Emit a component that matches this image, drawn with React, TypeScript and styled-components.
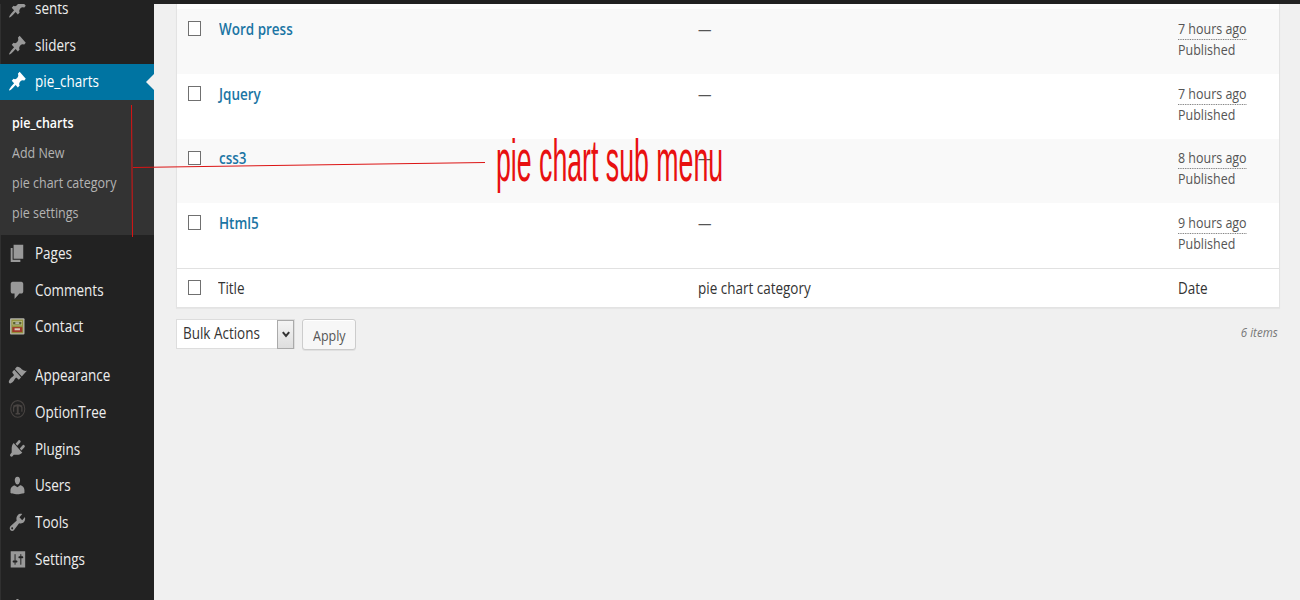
import React from "react";
import styled, { createGlobalStyle } from "styled-components";

const GlobalStyle = createGlobalStyle`
  * { box-sizing: border-box; }
  body { margin: 0; background: #f0f0f0; }
`;

const Page = styled.div`
  position: relative;
  display: flex;
  flex-direction: column;
  width: 1300px;
  height: 600px;
  overflow: hidden;
  background: #f0f0f0;
  font-family: "Open Sans", sans-serif;
`;

const AdminBar = styled.div`
  flex: none;
  height: 4px;
  background: #222;
`;

const Columns = styled.div`
  display: flex;
  flex: 1;
  min-height: 0;
`;

const Sidebar = styled.nav`
  flex: none;
  width: 154px;
  overflow: hidden;
  background: #222;
  box-shadow: inset 1px 0 0 #303030;
`;

const MenuGroup = styled.div<{ $offset?: number }>`
  margin-top: ${(p) => p.$offset ?? 0}px;
`;

const Label = styled.span<{ $size?: number; $weight?: number; $fit?: number; $from?: string }>`
  display: inline-block;
  white-space: nowrap;
  font-size: ${(p) => p.$size ?? 16}px;
  font-weight: ${(p) => p.$weight ?? 400};
  line-height: 20px;
  transform: scaleX(${(p) => p.$fit ?? 0.842});
  transform-origin: ${(p) => p.$from ?? "left"} center;
`;

const MenuRow = styled.div<{ $active?: boolean }>`
  position: relative;
  display: flex;
  align-items: center;
  height: 36.7px;
  padding-left: 8px;
  gap: 7.7px;
  color: ${(p) => (p.$active ? "#fff" : "#eee")};
  background: ${(p) => (p.$active ? "#0074a2" : "transparent")};
  svg {
    flex: none;
    width: 19.3px;
    height: 21.6px;
    overflow: visible;
    fill: ${(p) => (p.$active ? "#fff" : "#999")};
  }
  ${Label} {
    margin-bottom: 1.4px;
  }
`;

const Notch = styled.span`
  position: absolute;
  right: 0;
  top: 10px;
  border: solid transparent;
  border-width: 8.5px 8px 8.5px 0;
  border-right-color: #f0f0f0;
`;

const SubMenu = styled.div`
  height: 135px;
  padding: 7px 0 0 12px;
  background: #333;
`;

const SubItem = styled.div<{ $current?: boolean }>`
  display: flex;
  align-items: center;
  height: 30px;
  color: ${(p) => (p.$current ? "#fff" : "#b4b4b4")};
`;

const Content = styled.main`
  flex: 1;
  padding: 0 20px 0 22px;
`;

const Table = styled.div`
  height: 304px;
  background: #fff;
  border: 1px solid #e3e3e3;
  border-top: 0;
  padding-top: 5.4px;
  box-shadow: 0 1px 1px rgba(0, 0, 0, 0.04);
`;

const Row = styled.div<{ $striped?: boolean }>`
  display: grid;
  grid-template-columns: 41px 480px 480px 1fr;
  height: 64.7px;
  padding-top: 9.5px;
  background: ${(p) => (p.$striped ? "#f9f9f9" : "#fff")};
  color: #555;
`;

const FootRow = styled(Row)`
  height: 39px;
  padding-top: 8.5px;
  border-top: 1px solid #e1e1e1;
  color: #333;
`;

const Check = styled.span`
  display: block;
  width: 13px;
  height: 14.5px;
  margin: 2.5px 0 0 11px;
  border: 1px solid #707070;
  background: #fff;
`;

const TitleText = styled(Label)`
  margin-left: 0.5px;
  color: #1b75a4;
`;

const DateCell = styled.div`
  display: flex;
  flex-direction: column;
  align-items: flex-start;
`;

const Ago = styled(Label)`
  height: 21.1px;
  border-bottom: 1px dotted #666;
`;

const Actions = styled.div`
  display: flex;
  align-items: flex-start;
  padding-top: 10.5px;
`;

const Select = styled.div`
  display: flex;
  width: 119px;
  height: 30px;
  border: 1px solid #ddd;
  background: #fff;
  color: #333;
  padding: 4px 0 0 6px;
  justify-content: space-between;
`;

const SelectValue = styled(Label)`
  width: 94px;
  margin-top: -0.5px;
`;

const Arrow = styled.span`
  display: flex;
  flex: none;
  align-items: center;
  justify-content: center;
  width: 17px;
  height: 29px;
  margin-top: -4px;
  border: 1px solid #aaa;
  background: linear-gradient(#f4f4f4, #dedede);
`;

const Button = styled.div`
  display: flex;
  width: 54px;
  height: 31px;
  margin-left: 6.5px;
  padding: 5px 0 0 10px;
  border: 1px solid #ccc;
  border-radius: 3px;
  background: #f7f7f7;
  box-shadow: inset 0 1px 0 #fff, 0 1px 0 rgba(0, 0, 0, 0.06);
  color: #555;
`;

const Count = styled.div`
  display: flex;
  margin-left: auto;
  padding: 3.5px 2px 0 0;
  font-style: italic;
  color: #777;
`;

const Callout = styled.svg`
  position: absolute;
  left: 0;
  top: 0;
  pointer-events: none;
`;

const CalloutText = styled.span`
  position: absolute;
  left: 495.7px;
  top: 127px;
  white-space: nowrap;
  font: 60px/68px "Liberation Sans", sans-serif;
  color: #e81010;
  transform: scaleX(0.445);
  transform-origin: left center;
`;

const paths = {
  pin: "M10.44 3.02l1.82-1.82 6.36 6.35-1.83 1.82c-1.05-.68-2.48-.57-3.41.36l-.75.75c-.92.93-1.04 2.35-.35 3.41l-1.83 1.82-2.41-2.41-2.8 2.79c-.42.42-3.38 2.71-3.8 2.29s1.86-3.39 2.28-3.81l2.79-2.79L4.1 9.36l1.83-1.82c1.05.69 2.48.57 3.4-.36l.75-.75c.93-.92 1.05-2.35.36-3.41z",
  pages: "M6 15V2h10v13H6zm-1 1h8v2H3V5h2v11z",
  comments: "M5 2h9c1.1 0 2 .9 2 2v7c0 1.1-.9 2-2 2h-2l-5 5v-5H5c-1.1 0-2-.9-2-2V4c0-1.1.9-2 2-2z",
  appearance: "M14.48 11.06L7.41 3.99l1.5-1.5c.5-.56 2.3-.47 3.51.32 1.21.8 1.43 1.28 2.91 2.1 1.18.64 2.45 1.26 4.45.85zm-.71.71L6.7 4.7 4.93 6.47c-.39.39-.39 1.02 0 1.41l1.06 1.06c.39.39.39 1.03 0 1.42-.6.6-1.43 1.11-2.21 1.69-.35.26-.7.53-1.01.84C1.43 14.23.4 16.08 1.4 17.07c.99 1 2.84-.03 4.18-1.36.31-.31.58-.66.85-1.02.57-.78 1.08-1.61 1.69-2.21.39-.39 1.02-.39 1.41 0l1.06 1.06c.39.39 1.02.39 1.41 0z",
  plugins: "M13.11 4.36L9.87 7.6 8 5.73l3.24-3.24c.35-.34 1.05-.2 1.56.32.52.51.66 1.21.31 1.55zm-8 1.77l.91-1.12 9.01 9.01-1.19.84c-.71.71-2.63 1.16-3.82 1.16H6.14L4.9 17.26c-.59.59-1.54.59-2.12 0-.59-.58-.59-1.53 0-2.12l1.24-1.24v-3.88c0-1.13.4-3.19 1.09-3.89zm7.26 3.97l3.24-3.24c.34-.35 1.04-.21 1.55.31.52.51.66 1.21.31 1.55l-3.24 3.25z",
  users: "M10 9.25c-2.27 0-2.73-3.44-2.73-3.44C7 4.02 7.82 2 9.97 2c2.16 0 2.98 2.02 2.71 3.81 0 0-.41 3.44-2.68 3.44zm0 2.57L12.72 10c2.39 0 4.52 2.33 4.52 4.53v2.49s-3.65 1.13-7.24 1.13c-3.65 0-7.24-1.13-7.24-1.13v-2.49c0-2.25 1.94-4.48 4.47-4.48z",
  tools: "M16.68 9.77c-1.34 1.34-3.3 1.67-4.95.99l-5.41 6.52c-.99.99-2.59.99-3.58 0s-.99-2.59 0-3.57l6.52-5.42c-.68-1.65-.35-3.61.99-4.95 1.28-1.28 3.12-1.62 4.72-1.06l-2.89 2.89 2.82 2.82 2.86-2.87c.53 1.58.18 3.39-1.08 4.65zM3.81 16.21c.4.39 1.04.39 1.43 0 .4-.4.4-1.04 0-1.43-.39-.4-1.03-.4-1.43 0-.39.39-.39 1.03 0 1.43z",
  settings: "M18 17.500V2.500H3v15h15zM8 11h1c.55 0 1 .45 1 1s-.45 1-1 1H8v1.500c0 .28-.22.5-.5.5s-.5-.22-.5-.5V13H6c-.55 0-1-.45-1-1s.45-1 1-1h1V5.500c0-.28.22-.5.5-.5s.5.22.5.5V11zm5-2h-1c-.55 0-1-.45-1-1s.45-1 1-1h1V5.500c0-.28.22-.5.5-.5s.5.22.5.5V7h1c.55 0 1 .45 1 1s-.45 1-1 1h-1v5.500c0 .28-.22.5-.5.5s-.5-.22-.5-.5V9z",
  gear: "M9 2.300h2l.5 2 3 1.500v9H5V5.800l3.500-1.500z",
};

type IconName = keyof typeof paths | "contact" | "optiontree";

const Icon = ({ name }: { name: IconName }) => (
  <svg viewBox="0.2 0.4 20 20" preserveAspectRatio="none">
    {name === "contact" ? (
      <>
        <rect x="2.3" y="2.4" width="15" height="15.200" rx="1" fill="#b3b3aa" />
        <rect x="3.7" y="3.7" width="12.200" height="12.700" fill="#94943f" />
        <rect x="5" y="5" width="9.600" height="4" fill="#d0cf9c" />
        <rect x="5.5" y="5.700" width="8.600" height="2.600" fill="#56602f" />
        <rect x="7.8" y="6.300" width="4" height="1.300" fill="#ccc" />
        <rect x="4.6" y="10.700" width="10.400" height="4.600" fill="#a03a2c" />
        <rect x="7" y="11.800" width="5.600" height="1.800" fill="#dfc9bd" />
      </>
    ) : name === "optiontree" ? (
      <g fill="none" stroke="#484442">
        <ellipse cx="10.3" cy="6.800" rx="7.300" ry="7.700" strokeWidth="1.100" />
        <path d="M10.300 2.800v8.500M5.800 4.800q4.500-2.800 9 0" strokeWidth="2" />
        <path d="M8 11.300h4.600M6 5v4.500M14.600 5v4.500" strokeWidth="1.300" />
      </g>
    ) : (
      <path d={paths[name]} />
    )}
  </svg>
);

const Item = ({ icon, text, active }: { icon: IconName; text?: string; active?: boolean }) => (
  <MenuRow $active={active}>
    <Icon name={icon} />
    {text && <Label>{text}</Label>}
    {active && <Notch />}
  </MenuRow>
);

const rows = [
  { title: "Word press", ago: "7 hours ago" },
  { title: "Jquery", ago: "7 hours ago" },
  { title: "css3", ago: "8 hours ago" },
  { title: "Html5", ago: "9 hours ago" },
];

export default function App() {
  return (
    <Page>
      <GlobalStyle />
      <AdminBar />
      <Columns>
        <Sidebar>
          <MenuGroup $offset={-13.6}>
            <Item icon="pin" text="sents" />
            <Item icon="pin" text="sliders" />
            <Item icon="pin" text="pie_charts" active />
          </MenuGroup>
          <SubMenu>
            <SubItem $current>
              <Label $size={14.6} $fit={0.855} $weight={600}>pie_charts</Label>
            </SubItem>
            {["Add New", "pie chart category", "pie settings"].map((t) => (
              <SubItem key={t}>
                <Label $size={14.6} $fit={0.855}>{t}</Label>
              </SubItem>
            ))}
          </SubMenu>
          <MenuGroup>
            <Item icon="pages" text="Pages" />
            <Item icon="comments" text="Comments" />
            <Item icon="contact" text="Contact" />
          </MenuGroup>
          <MenuGroup $offset={12}>
            <Item icon="appearance" text="Appearance" />
            <Item icon="optiontree" text="OptionTree" />
            <Item icon="plugins" text="Plugins" />
            <Item icon="users" text="Users" />
            <Item icon="tools" text="Tools" />
            <Item icon="settings" text="Settings" />
          </MenuGroup>
          <MenuGroup $offset={12}>
            <Item icon="gear" />
          </MenuGroup>
        </Sidebar>
        <Content>
          <Table>
            {rows.map((r, i) => (
              <Row key={r.title} $striped={i % 2 === 0}>
                <Check />
                <TitleText $weight={600}>{r.title}</TitleText>
                <Label>—</Label>
                <DateCell>
                  <Ago $size={14.4} $fit={0.866}>{r.ago}</Ago>
                  <Label $size={14.4} $fit={0.866}>Published</Label>
                </DateCell>
              </Row>
            ))}
            <FootRow>
              <Check />
              <Label>Title</Label>
              <Label>pie chart category</Label>
              <Label>Date</Label>
            </FootRow>
          </Table>
          <Actions>
            <Select>
              <SelectValue>Bulk Actions</SelectValue>
              <Arrow>
                <svg width="8" height="7" viewBox="0 0 8 7">
                  <path d="M.8 1.200L4 5L7.200 1.200" fill="none" stroke="#333" strokeWidth="2" />
                </svg>
              </Arrow>
            </Select>
            <Button>
              <Label $size={14.6} $fit={0.855}>Apply</Label>
            </Button>
            <Count>
              <Label $size={13.4} $fit={0.865} $from="right">6 items</Label>
            </Count>
          </Actions>
        </Content>
      </Columns>
      <Callout width="1300" height="600" fill="none" stroke="#dc1414">
        <path d="M131.500 105L132.500 237M133 167.500L485 162.500" />
      </Callout>
      <CalloutText>pie chart sub menu</CalloutText>
    </Page>
  );
}
